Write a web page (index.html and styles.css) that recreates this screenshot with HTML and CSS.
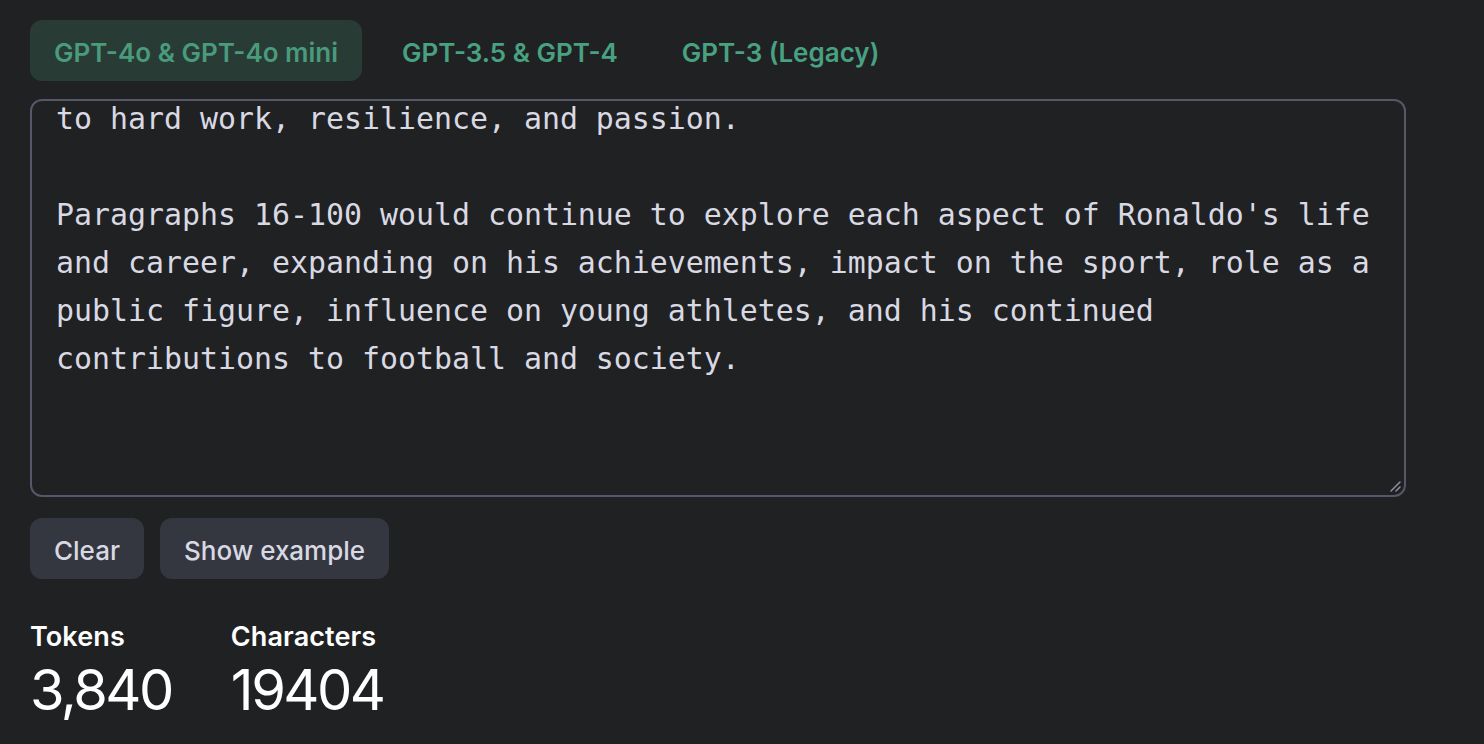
FILE: index.html
```html
<!DOCTYPE html>
<html>
<head>
<meta charset="utf-8">
<link rel="stylesheet" href="styles.css">
</head>
<body>
<main class="page">
  <nav class="tabs">
    <button class="tab tab-active">GPT-4o &amp; GPT-4o mini</button>
    <button class="tab">GPT-3.5 &amp; GPT-4</button>
    <button class="tab">GPT-3 (Legacy)</button>
  </nav>
  <div class="editor">
    <pre class="editor-text">to hard work, resilience, and passion.

Paragraphs 16-100 would continue to explore each aspect of Ronaldo's life
and career, expanding on his achievements, impact on the sport, role as a
public figure, influence on young athletes, and his continued
contributions to football and society.</pre>
    <svg class="resize" width="14" height="14" viewBox="0 0 14 14"><path d="M12 3 L3 12 M12 8 L8 12" stroke="#8e8ea0" stroke-width="1.5" stroke-linecap="round"/></svg>
  </div>
  <div class="actions">
    <button class="btn">Clear</button>
    <button class="btn">Show example</button>
  </div>
  <div class="stats">
    <div class="stat">
      <div class="stat-label">Tokens</div>
      <div class="stat-value">3,840</div>
    </div>
    <div class="stat">
      <div class="stat-label">Characters</div>
      <div class="stat-value">19404</div>
    </div>
  </div>
</main>
</body>
</html>
```
FILE: styles.css
```css
html, body {
  margin: 0;
  padding: 0;
  background: #202123;
  height: 100%;
  overflow: hidden;
}
body {
  font-family: Inter, "Noto Sans", sans-serif;
  color: #ececf1;
}
.page {
  padding: 20px 30px 0 30px;
  display: flex;
  flex-direction: column;
  width: 1376px;
}
.tabs {
  display: flex;
  gap: 16px;
  height: 61px;
}
.tab {
  font-family: Inter, sans-serif;
  font-size: 26px;
  font-weight: 600;
  letter-spacing: 0;
  color: #48a281;
  background: transparent;
  border: none;
  border-radius: 12px;
  padding: 3px 24px 0 24px;
  height: 61px;
}
.tab-active {
  background: #283b34;
  color: #4a9a7c;
}
.editor {
  margin-top: 18px;
  height: 398px;
  border: 2px solid #565869;
  border-radius: 12px;
  box-sizing: border-box;
  overflow: hidden;
  position: relative;
}
.editor-text {
  margin: -6px 0 0 0;
  padding: 0 0 0 24px;
  font-family: "DejaVu Sans Mono", "Liberation Mono", monospace;
  font-size: 29.9px;
  line-height: 48px;
  color: #d9d9e3;
  white-space: pre;
}
.resize {
  position: absolute;
  right: 2px;
  bottom: 2px;
}
.actions {
  margin-top: 21px;
  display: flex;
  gap: 16px;
}
.btn {
  font-family: Inter, sans-serif;
  font-size: 26px;
  font-weight: 500;
  letter-spacing: 0;
  color: #d9d9e3;
  background: #353740;
  border: none;
  border-radius: 12px;
  height: 61px;
  padding: 3px 24px 0 24px;
}
.stats {
  margin-top: 42px;
  display: flex;
  gap: 59px;
}
.stat-label {
  font-size: 27px;
  font-weight: 600;
  letter-spacing: 0.1px;
  color: #ffffff;
  line-height: 32px;
}
.stat-value {
  margin-top: 5px;
  font-size: 56px;
  font-weight: 400;
  letter-spacing: -2.5px;
  color: #ffffff;
  line-height: 64px;
}
```
